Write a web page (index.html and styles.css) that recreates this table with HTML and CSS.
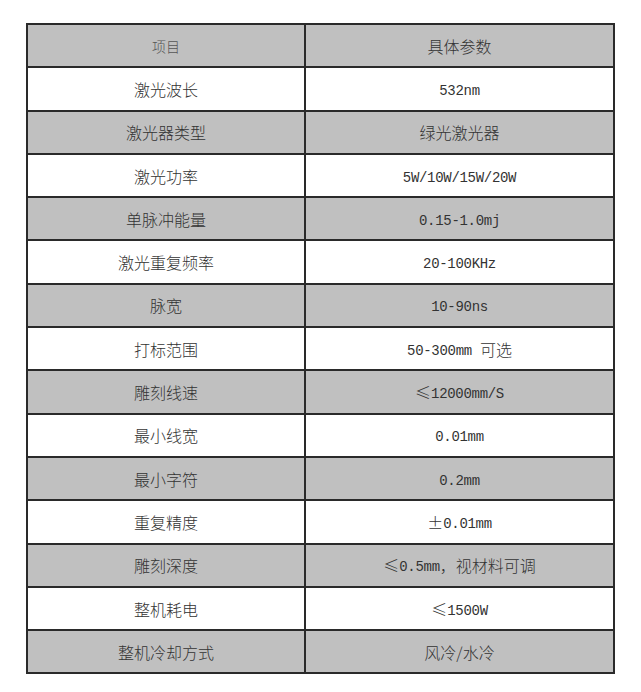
FILE: index.html
```html
<!DOCTYPE html>
<html lang="zh-CN">
<head>
<meta charset="utf-8">
<title>参数</title>
<link rel="stylesheet" href="styles.css">
</head>
<body>
<table class="spec">
  <tr class="head"><td class="small">项目</td><td>具体参数</td></tr>
  <tr class="w"><td>激光波长</td><td><span class="l">532nm</span></td></tr>
  <tr class="g"><td>激光器类型</td><td>绿光激光器</td></tr>
  <tr class="w"><td>激光功率</td><td><span class="l">5W/10W/15W/20W</span></td></tr>
  <tr class="g"><td>单脉冲能量</td><td><span class="l">0.15-1.0mj</span></td></tr>
  <tr class="w"><td>激光重复频率</td><td><span class="l">20-100KHz</span></td></tr>
  <tr class="g"><td>脉宽</td><td><span class="l">10-90ns</span></td></tr>
  <tr class="w"><td>打标范围</td><td><span class="l">50-300mm </span>可选</td></tr>
  <tr class="g"><td>雕刻线速</td><td>≤<span class="l">12000mm/S</span></td></tr>
  <tr class="w"><td>最小线宽</td><td><span class="l">0.01mm</span></td></tr>
  <tr class="g"><td>最小字符</td><td><span class="l">0.2mm</span></td></tr>
  <tr class="w"><td>重复精度</td><td>±<span class="l">0.01mm</span></td></tr>
  <tr class="g"><td>雕刻深度</td><td>≤<span class="l">0.5mm</span>，视材料可调</td></tr>
  <tr class="w"><td>整机耗电</td><td>≤<span class="l">1500W</span></td></tr>
  <tr class="g"><td>整机冷却方式</td><td>风冷/水冷</td></tr>
</table>
</body>
</html>
```
FILE: styles.css
```css
html, body {
  margin: 0;
  padding: 0;
  background: #ffffff;
}
body {
  padding: 23px 0 0 26px;
}
.spec {
  border-collapse: collapse;
  width: 589px;
  font-family: "Noto Sans CJK SC", "Liberation Serif", sans-serif;
  font-size: 16px;
  font-weight: 300;
  color: #333333;
}
.spec td {
  border: 2px solid #2a2a2a;
  height: 41.3px;
  padding: 0;
  text-align: center;
  vertical-align: middle;
}
.spec td:first-child {
  width: 276px;
}
.head td, .g td {
  background: #c0c0c0;
}
.w td {
  background: #ffffff;
}
.head td.small {
  font-size: 14px;
  color: #555555;
}
.l {
  font-family: "Liberation Mono", monospace;
  font-size: 14px;
  font-weight: 400;
  letter-spacing: -0.3px;
  vertical-align: 1px;
}
```
